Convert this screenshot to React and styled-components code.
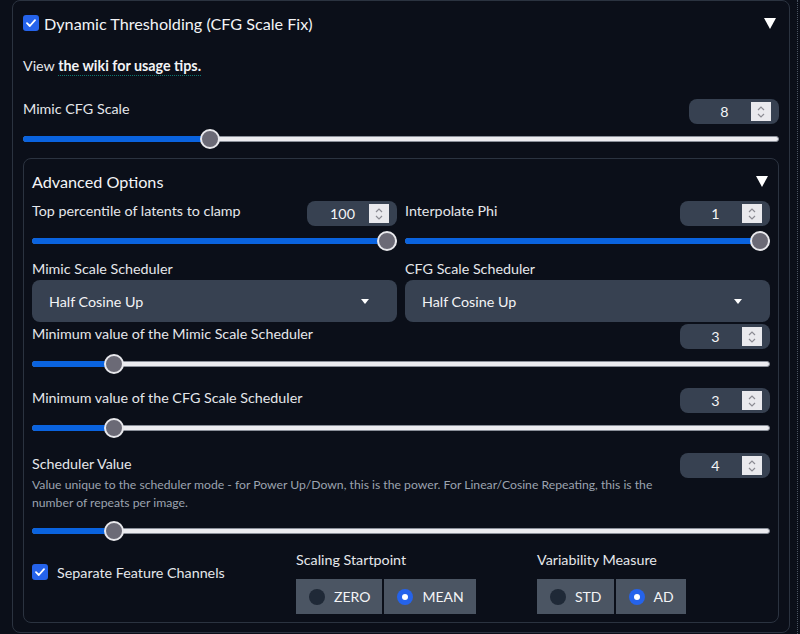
import React from "react";
import styled, { createGlobalStyle } from "styled-components";

const GlobalStyle = createGlobalStyle`
  html, body {
    margin: 0;
    padding: 0;
    background: #0b0f19;
  }
  body {
    font-family: Lato, "Liberation Sans", sans-serif;
    color: #e5e7eb;
  }
`;

const Page = styled.div`
  display: flex;
  height: 634px;
  overflow: hidden;
`;

const Panel = styled.div`
  margin-left: 12px;
  width: 778px;
  box-sizing: border-box;
  height: 633px;
  border: 1px solid #2b3340;
  border-radius: 8px;
  padding: 10px 10px 8px 10px;
`;

const ScrollEdge = styled.div`
  margin-left: 7px;
  width: 0;
  border-left: 1px dotted #4b5563;
`;

const Header = styled.div`
  display: flex;
  align-items: center;
  height: 24px;
`;

const Title = styled.span`
  flex: 1;
  font-size: 16.2px;
  color: #f3f4f6;
  margin-left: ${({ $indent }) => $indent || 0}px;
`;

const Check = styled.span`
  width: 16px;
  height: 16px;
  border-radius: 3px;
  background: #2563eb;
  display: inline-flex;
  align-items: center;
  justify-content: center;
  flex-shrink: 0;
`;

const Triangle = styled.svg`
  width: 12px;
  height: 11px;
  margin-right: ${({ $mr }) => $mr || 0}px;
`;

const Wiki = styled.div`
  margin-top: 21px;
  font-size: 14.3px;
  line-height: 20px;
  height: 20px;
  color: #e5e7eb;
`;

const WikiLink = styled.span`
  font-weight: 700;
  color: #f3f4f6;
  border-bottom: 1px dotted #0f766e;
  padding-bottom: 1px;
`;

const Block = styled.div`
  margin-top: ${({ $mt }) => $mt || 0}px;
`;

const Head = styled.div`
  display: flex;
  align-items: flex-start;
  justify-content: space-between;
`;

const LabelCol = styled.div`
  display: flex;
  flex-direction: column;
`;

const Label = styled.div`
  font-size: 14.3px;
  line-height: 18px;
  height: 18px;
  margin-top: ${({ $mt }) => ($mt === undefined ? 1 : $mt)}px;
  color: #e5e7eb;
`;

const Info = styled.div`
  margin-top: 3px;
  font-size: 12.2px;
  line-height: 18px;
  color: #9ca3af;
  max-width: 650px;
`;

const NumBox = styled.div`
  width: 90px;
  height: 25px;
  flex-shrink: 0;
  box-sizing: border-box;
  background: #374151;
  border-radius: 8px;
  display: flex;
  align-items: center;
  padding-left: 9px;
  padding-right: 8px;
`;

const NumValue = styled.span`
  flex: 1;
  text-align: center;
  font-size: 14.3px;
  color: #f3f4f6;
`;

const Spinner = styled.span`
  width: 20px;
  height: 19px;
  background: #e9e9ed;
  display: flex;
  align-items: center;
  justify-content: center;
`;

const SliderWrap = styled.div`
  position: relative;
  height: 20px;
  margin-top: ${({ $mt }) => $mt || 5}px;
`;

const Track = styled.div`
  position: absolute;
  left: 0;
  right: 0;
  top: 7px;
  height: 6px;
  box-sizing: border-box;
  border-radius: 3px;
  background: #ececf0;
  border: 1px solid #8a8f99;
`;

const Fill = styled.div`
  position: absolute;
  left: 0;
  top: 7px;
  height: 6px;
  border-radius: 3px;
  background: #0a63df;
  width: calc(10px + (100% - 20px) * ${({ $p }) => $p});
`;

const Thumb = styled.div`
  position: absolute;
  top: 0;
  width: 20px;
  height: 20px;
  box-sizing: border-box;
  border-radius: 50%;
  background: #6b6a76;
  border: 2px solid #e8e8ec;
  left: calc((100% - 20px) * ${({ $p }) => $p});
`;

const Inner = styled.div`
  margin-top: 9px;
  border: 1px solid #2b3340;
  border-radius: 8px;
  padding: 10px 8px 8px 8px;
`;

const Cols = styled.div`
  display: grid;
  grid-template-columns: 1fr 1fr;
  column-gap: 8px;
  margin-top: ${({ $mt }) => $mt || 0}px;
`;

const Select = styled.div`
  margin-top: 2px;
  height: 42px;
  background: #374151;
  border-radius: 8px;
  display: flex;
  align-items: center;
  justify-content: space-between;
  padding: 0 28px 0 17px;
  font-size: 14.3px;
  color: #f3f4f6;
`;

const Caret = styled.svg`
  width: 8px;
  height: 5px;
`;

const Bottom = styled.div`
  display: grid;
  grid-template-columns: 264px 241px 1fr;
  margin-top: 10px;
`;

const CheckRow = styled.div`
  display: flex;
  align-items: center;
  gap: 9px;
  margin-top: 12px;
  font-size: 14.3px;
  color: #e5e7eb;
  height: 18px;
`;

const RadioGroup = styled.div`
  display: flex;
  gap: 2px;
  margin-top: 10px;
`;

const RadioBox = styled.div`
  height: 35px;
  box-sizing: border-box;
  background: #4b5563;
  display: flex;
  align-items: center;
  gap: 9px;
  padding: 0 12px 0 13px;
  font-size: 14px;
  color: #f3f4f6;
`;

const Dot = styled.span`
  width: 16px;
  height: 16px;
  border-radius: 50%;
  background: ${({ $on }) => ($on ? "#2563eb" : "#1f2937")};
  display: flex;
  align-items: center;
  justify-content: center;
  &::after {
    content: "";
    width: 6px;
    height: 6px;
    border-radius: 50%;
    background: #fff;
    display: ${({ $on }) => ($on ? "block" : "none")};
  }
`;

const Tick = () => (
  <svg width="10" height="8" viewBox="0 0 10 8">
    <path d="M1 4.2 L3.8 7 L9 1.2" fill="none" stroke="#fff" strokeWidth="1.8" strokeLinecap="round" strokeLinejoin="round" />
  </svg>
);

const Down = ({ mr }) => (
  <Triangle $mr={mr} viewBox="0 0 12 11">
    <polygon points="0,0 12,0 6,11" fill="#fff" />
  </Triangle>
);

const Number = ({ value }) => (
  <NumBox>
    <NumValue>{value}</NumValue>
    <Spinner>
      <svg width="10" height="14" viewBox="0 0 10 14">
        <path d="M2 5 L5 2 L8 5 M2 9 L5 12 L8 9" fill="none" stroke="#8b8b93" strokeWidth="1.2" />
      </svg>
    </Spinner>
  </NumBox>
);

const Slider = ({ p, mt }) => (
  <SliderWrap $mt={mt}>
    <Track />
    <Fill $p={p} />
    <Thumb $p={p} />
  </SliderWrap>
);

const SliderBlock = ({ label, value, p, mt, info }) => (
  <Block $mt={mt}>
    <Head>
      <LabelCol>
        <Label $mt={info ? 2 : 1}>{label}</Label>
        {info && <Info>{info}</Info>}
      </LabelCol>
      <Number value={value} />
    </Head>
    <Slider p={p} mt={info ? 9 : 5} />
  </Block>
);

const SelectBlock = ({ label, value }) => (
  <Block $mt={9}>
    <Label $mt={0}>{label}</Label>
    <Select>
      {value}
      <Caret viewBox="0 0 8 5">
        <polygon points="0,0 8,0 4,5" fill="#fff" />
      </Caret>
    </Select>
  </Block>
);

const Radio = ({ label, options, selected }) => (
  <div>
    <Label $mt={0}>{label}</Label>
    <RadioGroup>
      {options.map(o => (
        <RadioBox key={o}>
          <Dot $on={o === selected} />
          {o}
        </RadioBox>
      ))}
    </RadioGroup>
  </div>
);

export default function App() {
  return (
    <Page>
      <GlobalStyle />
      <Panel>
        <Header>
          <Check>
            <Tick />
          </Check>
          <Title $indent={5}>Dynamic Thresholding (CFG Scale Fix)</Title>
          <Down mr={3} />
        </Header>
        <Wiki>
          View <WikiLink>the wiki for usage tips.</WikiLink>
        </Wiki>
        <SliderBlock label="Mimic CFG Scale" value="8" p={0.2405} mt={23} />
        <Inner>
          <Header>
            <Title>Advanced Options</Title>
            <Down mr={2} />
          </Header>
          <Cols $mt={8}>
            <SliderBlock label="Top percentile of latents to clamp" value="100" p={1} />
            <SliderBlock label="Interpolate Phi" value="1" p={1} />
          </Cols>
          <Cols>
            <SelectBlock label="Mimic Scale Scheduler" value="Half Cosine Up" />
            <SelectBlock label="CFG Scale Scheduler" value="Half Cosine Up" />
          </Cols>
          <SliderBlock label="Minimum value of the Mimic Scale Scheduler" value="3" p={0.1} mt={2} />
          <SliderBlock label="Minimum value of the CFG Scale Scheduler" value="3" p={0.1} mt={14} />
          <SliderBlock
            label="Scheduler Value"
            value="4"
            p={0.1}
            mt={15}
            info="Value unique to the scheduler mode - for Power Up/Down, this is the power. For Linear/Cosine Repeating, this is the number of repeats per image."
          />
          <Bottom>
            <CheckRow>
              <Check>
                <Tick />
              </Check>
              Separate Feature Channels
            </CheckRow>
            <Radio label="Scaling Startpoint" options={["ZERO", "MEAN"]} selected="MEAN" />
            <Radio label="Variability Measure" options={["STD", "AD"]} selected="AD" />
          </Bottom>
        </Inner>
      </Panel>
      <ScrollEdge />
    </Page>
  );
}
